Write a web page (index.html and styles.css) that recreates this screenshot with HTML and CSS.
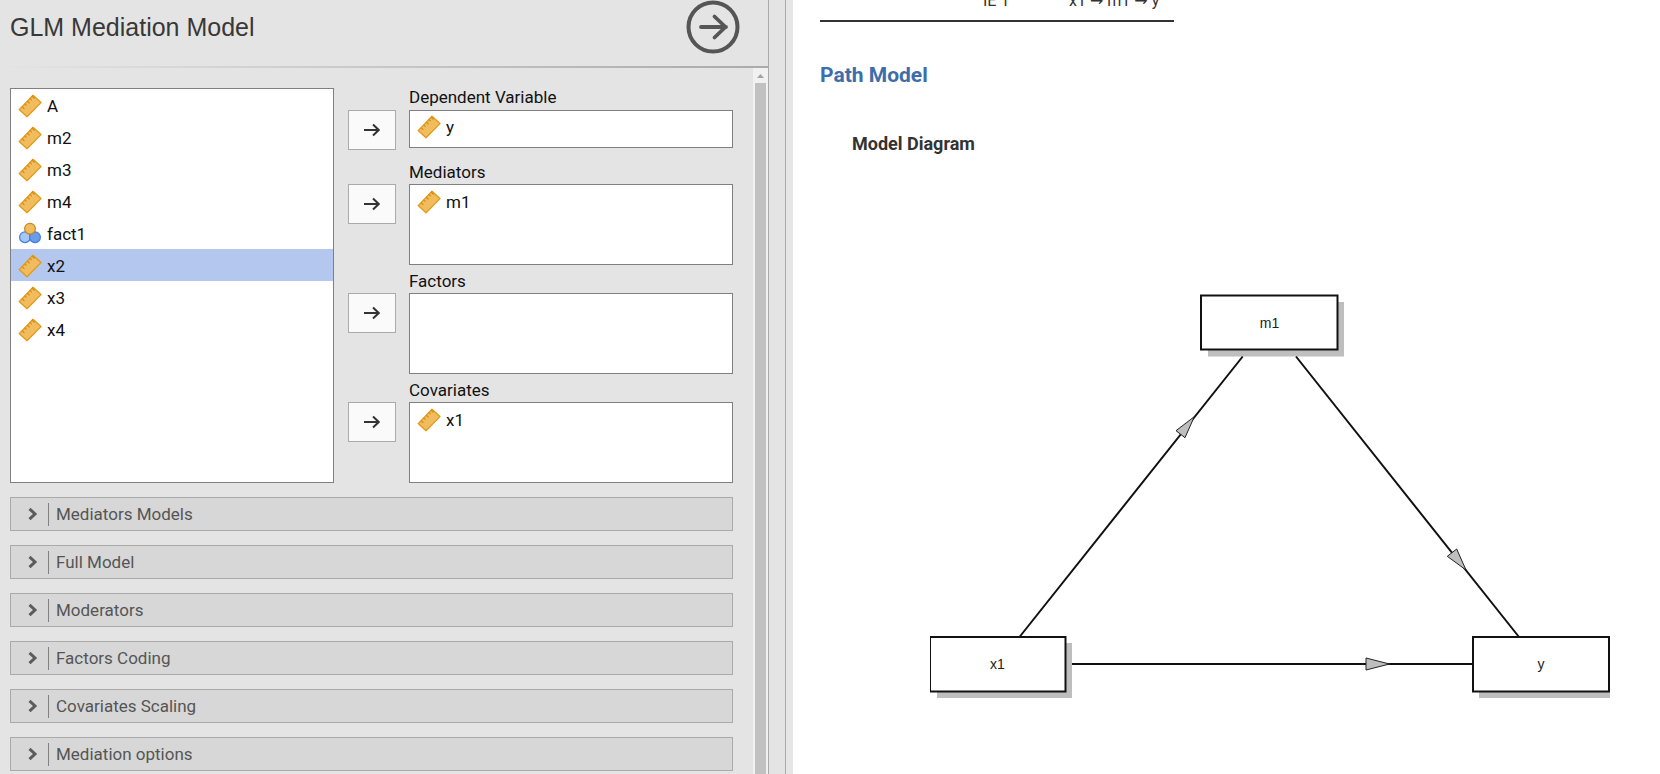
FILE: index.html
```html
<!DOCTYPE html>
<html lang="en">
<head>
<meta charset="utf-8">
<title>GLM Mediation Model</title>
<link rel="stylesheet" href="styles.css">
</head>
<body>
<svg class="defs" aria-hidden="true">
  <symbol id="ruler" viewBox="0 0 24 24">
    <path d="M15 1.2 23 8.6 9 22.8 1.2 15.6Z" fill="#f0bc5e" stroke="#e39a17" stroke-width="1.3" stroke-linejoin="round"/>
    <path d="M4 12.6l2.4 2.3M6.6 9.8l1.9 1.8M9.2 7l2.4 2.3M11.8 4.4l1.9 1.8M14 2l2.6 2.5" fill="none" stroke="#d08c14" stroke-width="1.1"/>
  </symbol>
  <symbol id="nominal" viewBox="0 0 24 24">
    <circle cx="7" cy="15.2" r="5.4" fill="#a9c5f2" stroke="#3f7fe0" stroke-width="1.2"/>
    <circle cx="17" cy="15.2" r="5.4" fill="#6c9ce8" stroke="#3f7fe0" stroke-width="1.2"/>
    <circle cx="12" cy="6.7" r="5.4" fill="#f0bc5e" stroke="#c28a22" stroke-width="1.2"/>
  </symbol>
  <symbol id="arrow" viewBox="0 0 16 14">
    <path d="M0 7h14.5M9 1.5 14.7 7 9 12.5" fill="none" stroke="#333" stroke-width="2"/>
  </symbol>
  <symbol id="chevron" viewBox="0 0 10 14">
    <path d="M1.5 1.8 7 7 1.5 12.2" fill="none" stroke="#5c5c5c" stroke-width="3"/>
  </symbol>
</svg>
<div class="app">
  <section class="options">
    <header class="options-header">
      <h1>GLM Mediation Model</h1>
      <button class="hide-button" type="button" aria-label="Hide options">
        <svg viewBox="0 0 54 54"><circle cx="27" cy="27" r="24.5" fill="none" stroke="#555" stroke-width="4"/><path d="M15 27h25M28.500 16.500 39.500 27 28.500 37.500" fill="none" stroke="#555" stroke-width="3.800" stroke-linecap="round" stroke-linejoin="round"/></svg>
      </button>
    </header>
    <div class="options-scroll">
      <div class="options-body">
        <div class="variables">
          <ul class="box supplier" aria-label="Variables">
            <li><svg class="icon"><use href="#ruler"/></svg>A</li>
            <li><svg class="icon"><use href="#ruler"/></svg>m2</li>
            <li><svg class="icon"><use href="#ruler"/></svg>m3</li>
            <li><svg class="icon"><use href="#ruler"/></svg>m4</li>
            <li><svg class="icon"><use href="#nominal"/></svg>fact1</li>
            <li class="selected"><svg class="icon"><use href="#ruler"/></svg>x2</li>
            <li><svg class="icon"><use href="#ruler"/></svg>x3</li>
            <li><svg class="icon"><use href="#ruler"/></svg>x4</li>
          </ul>
          <div class="targets">
            <div class="target single">
              <h2 id="dep">Dependent Variable</h2>
              <button class="move" type="button" aria-label="Move to Dependent Variable"><svg><use href="#arrow"/></svg></button>
              <ul class="box" aria-labelledby="dep"><li><svg class="icon"><use href="#ruler"/></svg>y</li></ul>
            </div>
            <div class="target">
              <h2 id="med">Mediators</h2>
              <button class="move" type="button" aria-label="Move to Mediators"><svg><use href="#arrow"/></svg></button>
              <ul class="box" aria-labelledby="med"><li><svg class="icon"><use href="#ruler"/></svg>m1</li></ul>
            </div>
            <div class="target">
              <h2 id="fac">Factors</h2>
              <button class="move" type="button" aria-label="Move to Factors"><svg><use href="#arrow"/></svg></button>
              <ul class="box" aria-labelledby="fac"></ul>
            </div>
            <div class="target">
              <h2 id="cov">Covariates</h2>
              <button class="move" type="button" aria-label="Move to Covariates"><svg><use href="#arrow"/></svg></button>
              <ul class="box" aria-labelledby="cov"><li><svg class="icon"><use href="#ruler"/></svg>x1</li></ul>
            </div>
          </div>
        </div>
        <button class="section" type="button"><svg><use href="#chevron"/></svg><span>Mediators Models</span></button>
        <button class="section" type="button"><svg><use href="#chevron"/></svg><span>Full Model</span></button>
        <button class="section" type="button"><svg><use href="#chevron"/></svg><span>Moderators</span></button>
        <button class="section" type="button"><svg><use href="#chevron"/></svg><span>Factors Coding</span></button>
        <button class="section" type="button"><svg><use href="#chevron"/></svg><span>Covariates Scaling</span></button>
        <button class="section" type="button"><svg><use href="#chevron"/></svg><span>Mediation options</span></button>
      </div>
      <div class="scrollbar" aria-hidden="true">
        <svg viewBox="0 0 15 15"><path d="M4 10 7.500 6 11 10Z" fill="#a3a3a3"/></svg>
        <div class="thumb"></div>
      </div>
    </div>
  </section>
  <div class="splitter"></div>
  <main class="results">
    <table>
      <tbody><tr><td></td><td>IE 1</td><td>x1 → m1 → y</td></tr></tbody>
    </table>
    <h2>Path Model</h2>
    <section class="figure">
      <h3>Model Diagram</h3>
      <svg class="diagram" viewBox="852 180 808 560" role="img" aria-label="Path diagram: x1 to m1, m1 to y, x1 to y">
        <g fill="#bebebe">
          <path d="M1208 302h136v54.500h-136zM937 643h135v55H937zM1479 643h131v55h-131z"/>
        </g>
        <g fill="none" stroke="#111" stroke-width="2">
          <path d="M1019.500 637 1242.700 356.500M1296 356.500 1519 637M1072 664h401"/>
        </g>
        <g fill="#bebebe" stroke="#222" stroke-width="1">
          <path d="M1194.300 416.700 1176 430.700 1185 437.700ZM1466 570 1447.300 556.300 1456.700 549ZM1389.500 664 1366 658V670Z"/>
        </g>
        <g fill="#fff" stroke="#111" stroke-width="2">
          <rect x="1201" y="295.500" width="136.500" height="54"/>
          <path d="M930 637h135.500v54.500h-135.500" />
          <path d="M930.500 637v54.500" stroke-width="1"/>
          <rect x="1473" y="637" width="136" height="54.500"/>
        </g>
        <g class="node-labels">
          <text x="1269.500" y="328">m1</text>
          <text x="997.500" y="669">x1</text>
          <text x="1541" y="669">y</text>
        </g>
      </svg>
    </section>
  </main>
</div>
</body>
</html>
```
FILE: styles.css
```css
* { box-sizing: border-box; }

body {
  margin: 0;
  font-family: Roboto, "Liberation Sans", sans-serif;
  font-size: 17px;
  color: #111;
  background: #fff;
}

h1, h2, h3, ul { margin: 0; padding: 0; font-weight: normal; }
ul { list-style: none; }
button { font: inherit; color: inherit; padding: 0; cursor: pointer; }
svg { display: block; }
.defs { position: absolute; width: 0; height: 0; }

.app {
  display: grid;
  grid-template-columns: minmax(560px, 768fr) 25px minmax(0, 867fr);
  height: 100vh;
  overflow: hidden;
}

/* Options panel */
.options {
  display: flex;
  flex-direction: column;
  min-height: 0;
  background: #e4e4e4;
}
.options-header {
  display: flex;
  justify-content: space-between;
  padding: 0 28px 12px 10px;
  border-bottom: 2px solid;
  border-image: linear-gradient(to right, #e4e4e4, #aaa) 1;
}
.options-header h1 {
  font-family: "Liberation Sans", sans-serif;
  font-size: 25px;
  line-height: 54px;
  color: #383838;
}
.hide-button { width: 54px; height: 54px; border: 0; background: none; }

.options-scroll { display: flex; flex: 1; min-height: 0; overflow: hidden; }
.options-body { flex: 1; padding: 20px 20px 0 10px; }

.scrollbar {
  display: flex;
  flex-direction: column;
  width: 15px;
  background: #f1f1f1;
}
.scrollbar svg { width: 15px; height: 15px; }
.thumb { flex: 1; margin: 0 2px; background: #c1c1c1; }

.variables {
  display: grid;
  grid-template-columns: 324fr 399fr;
}
.box { border: 1px solid #808080; background: #fff; }
.box li {
  display: flex;
  align-items: center;
  gap: 5px;
  height: 32px;
  padding: 2px 0 0 7px;
}
.box .selected { background: #b3c7ef; }
.icon { width: 24px; height: 24px; }

.targets { display: flex; flex-direction: column; gap: 6px; padding-left: 14px; }
.target {
  display: grid;
  grid-template-columns: 48px 1fr;
  grid-template-rows: 22px auto;
  column-gap: 13px;
}
.target h2 { grid-column: 2; font-size: 17px; line-height: 20px; }
.target .box { min-height: 81px; }
.target.single { margin-bottom: 8px; }
.target.single h2 { line-height: 18px; }
.target.single .box { min-height: 38px; }
.target.single li { padding-top: 0; }
.move {
  display: grid;
  place-items: center;
  width: 48px;
  height: 40px;
  border: 1px solid #aaa;
  background: #fafafa;
}
.single .move { margin-bottom: -2px; }
.move svg { width: 16px; height: 14px; }

.section {
  display: flex;
  align-items: center;
  width: 100%;
  height: 34px;
  margin-top: 14px;
  padding-left: 17px;
  border: 1px solid #aaa;
  background: #d7d7d7;
  color: #555;
}
.section svg { width: 10px; height: 14px; }
.section span {
  margin-left: 10px;
  padding-left: 7px;
  border-left: 1px solid #808080;
  line-height: 23px;
}

.splitter {
  border-left: 1px solid #aaa;
  background: linear-gradient(to right, #e4e4e4 16px, #aaa 16px, #aaa 17px, #e6e6e6 17px);
}

/* Results */
.results { min-width: 0; padding-left: 27px; color: #333; overflow: hidden; }
.results table {
  width: 354px;
  margin-top: -11px;
  border-collapse: collapse;
  border-bottom: 2px solid #333;
  font-family: Roboto, "DejaVu Sans", sans-serif;
  font-size: 16px;
  line-height: 24px;
}
.results td { padding: 0 0 7px; white-space: nowrap; }
.results td:nth-child(1) { width: 163px; }
.results td:nth-child(2) { width: 86px; }
.results h2 {
  margin-top: 40px;
  font-size: 21px;
  font-weight: bold;
  line-height: 26px;
  color: #3e6da9;
}
.figure { padding-left: 32px; }
.figure h3 {
  margin-top: 44px;
  font-size: 18px;
  font-weight: bold;
  line-height: 24px;
}
.diagram { width: 100%; margin-top: 24px; }
.node-labels {
  font-family: "Liberation Sans", sans-serif;
  font-size: 14px;
  fill: #222;
  text-anchor: middle;
}
```
